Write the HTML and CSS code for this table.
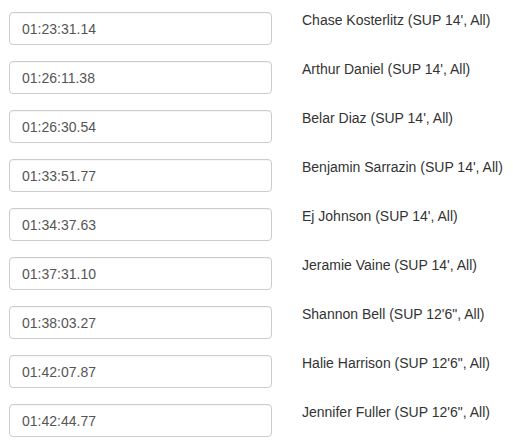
FILE: index.html
```html
<!DOCTYPE html>
<html>
<head>
<meta charset="utf-8">
<link rel="stylesheet" href="styles.css">
</head>
<body>
<div class="list">
  <div class="row"><input class="time" type="text" value="01:23:31.14"><span class="name">Chase Kosterlitz (SUP 14', All)</span></div>
  <div class="row"><input class="time" type="text" value="01:26:11.38"><span class="name">Arthur Daniel (SUP 14', All)</span></div>
  <div class="row"><input class="time" type="text" value="01:26:30.54"><span class="name">Belar Diaz (SUP 14', All)</span></div>
  <div class="row"><input class="time" type="text" value="01:33:51.77"><span class="name">Benjamin Sarrazin (SUP 14', All)</span></div>
  <div class="row"><input class="time" type="text" value="01:34:37.63"><span class="name">Ej Johnson (SUP 14', All)</span></div>
  <div class="row"><input class="time" type="text" value="01:37:31.10"><span class="name">Jeramie Vaine (SUP 14', All)</span></div>
  <div class="row"><input class="time" type="text" value="01:38:03.27"><span class="name">Shannon Bell (SUP 12'6", All)</span></div>
  <div class="row"><input class="time" type="text" value="01:42:07.87"><span class="name">Halie Harrison (SUP 12'6", All)</span></div>
  <div class="row"><input class="time" type="text" value="01:42:44.77"><span class="name">Jennifer Fuller (SUP 12'6", All)</span></div>
</div>
</body>
</html>
```
FILE: styles.css
```css
html, body {
  margin: 0;
  padding: 0;
  background: #fff;
}
body {
  font-family: "Liberation Sans", Arial, sans-serif;
  font-size: 14px;
  color: #333;
}
.list {
  padding: 12px 0 0 9px;
  display: flex;
  flex-direction: column;
  gap: 16px;
}
.row {
  display: flex;
  align-items: flex-start;
}
.time {
  box-sizing: border-box;
  width: 263px;
  height: 33px;
  margin: 0;
  padding: 6px 12px;
  border: 1px solid #ccc;
  border-radius: 4px;
  font-family: "Liberation Sans", Arial, sans-serif;
  font-size: 14px;
  color: #555;
  background: #fff;
  outline: none;
  box-shadow: inset 0 1px 1px rgba(0,0,0,0.04);
}
.name {
  margin-left: 30px;
  margin-top: -2px;
  line-height: 20px;
  color: #333;
  white-space: nowrap;
}
```
